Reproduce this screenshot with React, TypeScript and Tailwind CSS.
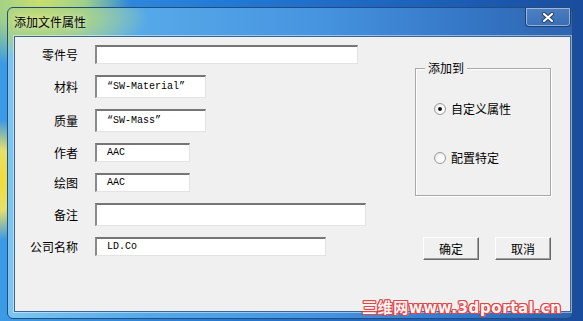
import React from "react";

// Field rows on the left side of the dialog
const rows = [
  { label: "零件号", size: "w-[263px] h-[19px]", value: "" },
  { label: "材料", size: "w-[111px] h-[23px]", value: "\u201cSW-Material\u201d" },
  { label: "质量", size: "w-[111px] h-[23px]", value: "\u201cSW-Mass\u201d" },
  { label: "作者", size: "w-[95px] h-[19px]", value: "AAC" },
  { label: "绘图", size: "w-[95px] h-[19px]", value: "AAC" },
  { label: "备注", size: "w-[271px] h-[23px]", value: "" },
  { label: "公司名称", size: "w-[231px] h-[19px]", value: "LD.Co" },
];

const cjk = "font-['Noto_Sans_CJK_SC',sans-serif]";

const Field = ({ size, value }: { size: string; value: string }) => (
  <div
    className={`flex items-center ${size} bg-white border-t-2 border-l-2 border-b border-r border-t-[#767676] border-l-[#8a8a8a] border-b-[#e3e3e3] border-r-[#e3e3e3] pl-[10px] font-['Liberation_Mono',monospace] text-[10px] leading-none text-black whitespace-pre`}
  >
    {value}
  </div>
);

const Radio = ({ checked, label }: { checked?: boolean; label: string }) => (
  <div className="flex items-center h-[14px] gap-[5px]">
    <div className="w-[12px] h-[12px] rounded-full border border-[#9a9a9a] bg-[radial-gradient(circle_at_60%_60%,#ffffff_30%,#dcdcdc)] flex items-center justify-center">
      {checked && <div className="w-[4px] h-[4px] rounded-full bg-[#111]" />}
    </div>
    <span className={`${cjk} text-[12px] leading-none text-black`}>{label}</span>
  </div>
);

const Button = ({ label }: { label: string }) => (
  <div
    className={`w-[56px] h-[23px] flex items-center justify-center bg-[#f0f0f0] border border-t-white border-l-white border-r-[#696969] border-b-[#696969] shadow-[inset_-1px_-1px_0_#a0a0a0] ${cjk} text-[12px] leading-none text-black`}
  >
    {label}
  </div>
);

export default function App() {
  return (
    <div className="relative w-[583px] h-[321px] overflow-hidden bg-[radial-gradient(ellipse_90px_70px_at_40px_0px,#c9e06a_0%,#9fd08a_50%,transparent_100%),radial-gradient(ellipse_40px_60px_at_0px_180px,#f2dc3c_0%,#e6e06a_50%,transparent_100%),linear-gradient(to_right,#3c9ae6,#2278d4_40%,#1c5cb4_80%,#1a4c9c)]">
      {/* Window */}
      <div className="absolute left-[7px] top-[7px] w-[566px] h-[312px] rounded-[6px] border border-[#244c7c] bg-[radial-gradient(ellipse_110px_40px_at_30px_10px,#c4dc72_0%,#a6d28c_45%,transparent_100%),linear-gradient(to_right,#7cc6f0,#55a8e8_25%,#4694e0_55%,#3678c8_80%,#2c64b0)] flex flex-col pl-[6px] pb-[6px]">
        {/* Title bar */}
        <div className="h-[28px] flex justify-between items-start">
          <span className={`${cjk} text-[12px] leading-none text-black mt-[8px] [text-shadow:0_0_6px_rgba(255,255,255,0.8)]`}>
            添加文件属性
          </span>
          <div className="w-[46px] h-[19px] rounded-b-[4px] border border-t-0 border-[#1f3f6c] shadow-[inset_0_0_0_1px_rgba(255,255,255,0.45)] bg-[linear-gradient(to_bottom,rgba(255,255,255,0.15),rgba(255,255,255,0.05))] flex items-center justify-center mr-[1px]">
            <svg width="14" height="11" viewBox="0 0 14 11">
              <path d="M3 2 L11 9 M11 2 L3 9" stroke="#2a3e5a" strokeWidth="4" strokeLinecap="round" />
              <path d="M3 2 L11 9 M11 2 L3 9" stroke="#ffffff" strokeWidth="2.2" strokeLinecap="round" />
            </svg>
          </div>
        </div>

        {/* Client area */}
        <div className="flex-1 mr-[1px] border border-[#3d6696] bg-[#f0f0f0] shadow-[0_0_0_1px_rgba(255,255,255,0.45)] flex">
          <div className="w-[400px] flex flex-col gap-[11px] pt-[8px]">
            {rows.map((row) => (
              <div key={row.label} className="flex items-center gap-[17px]">
                <span className={`w-[63px] text-right ${cjk} text-[12px] leading-none text-black`}>
                  {row.label}
                </span>
                <Field size={row.size} value={row.value} />
              </div>
            ))}
          </div>

          <div className="w-[136px] pt-[31px] flex flex-col">
            <div className="relative h-[128px] border border-[#a8a8a8] shadow-[1px_1px_0_#fff,inset_1px_1px_0_#fff] flex flex-col pt-[33px] pl-[18px] gap-[35px]">
              <span className={`absolute -top-[8px] left-[9px] px-[3px] bg-[#f0f0f0] ${cjk} text-[12px] leading-[14px] text-black`}>
                添加到
              </span>
              <Radio checked label="自定义属性" />
              <Radio label="配置特定" />
            </div>
            <div className="mt-[41px] flex justify-end gap-[16px]">
              <Button label="确定" />
              <Button label="取消" />
            </div>
          </div>
        </div>
      </div>

      {/* Watermark */}
      <div className="absolute left-[362px] top-[300px] font-['DejaVu_Sans','Noto_Sans_CJK_SC',sans-serif] font-bold text-[15px] leading-[16px] text-[#fff4f4] tracking-[0.6px] [text-shadow:1px_0_0_#e04646,-1px_0_0_#e04646,0_1px_0_#e04646,0_-1px_0_#e04646,1px_1px_0_#e04646,-1px_-1px_0_#e04646,1px_-1px_0_#e04646,-1px_1px_0_#e04646]">
        三维网www.3dportal.cn
      </div>
    </div>
  );
}
